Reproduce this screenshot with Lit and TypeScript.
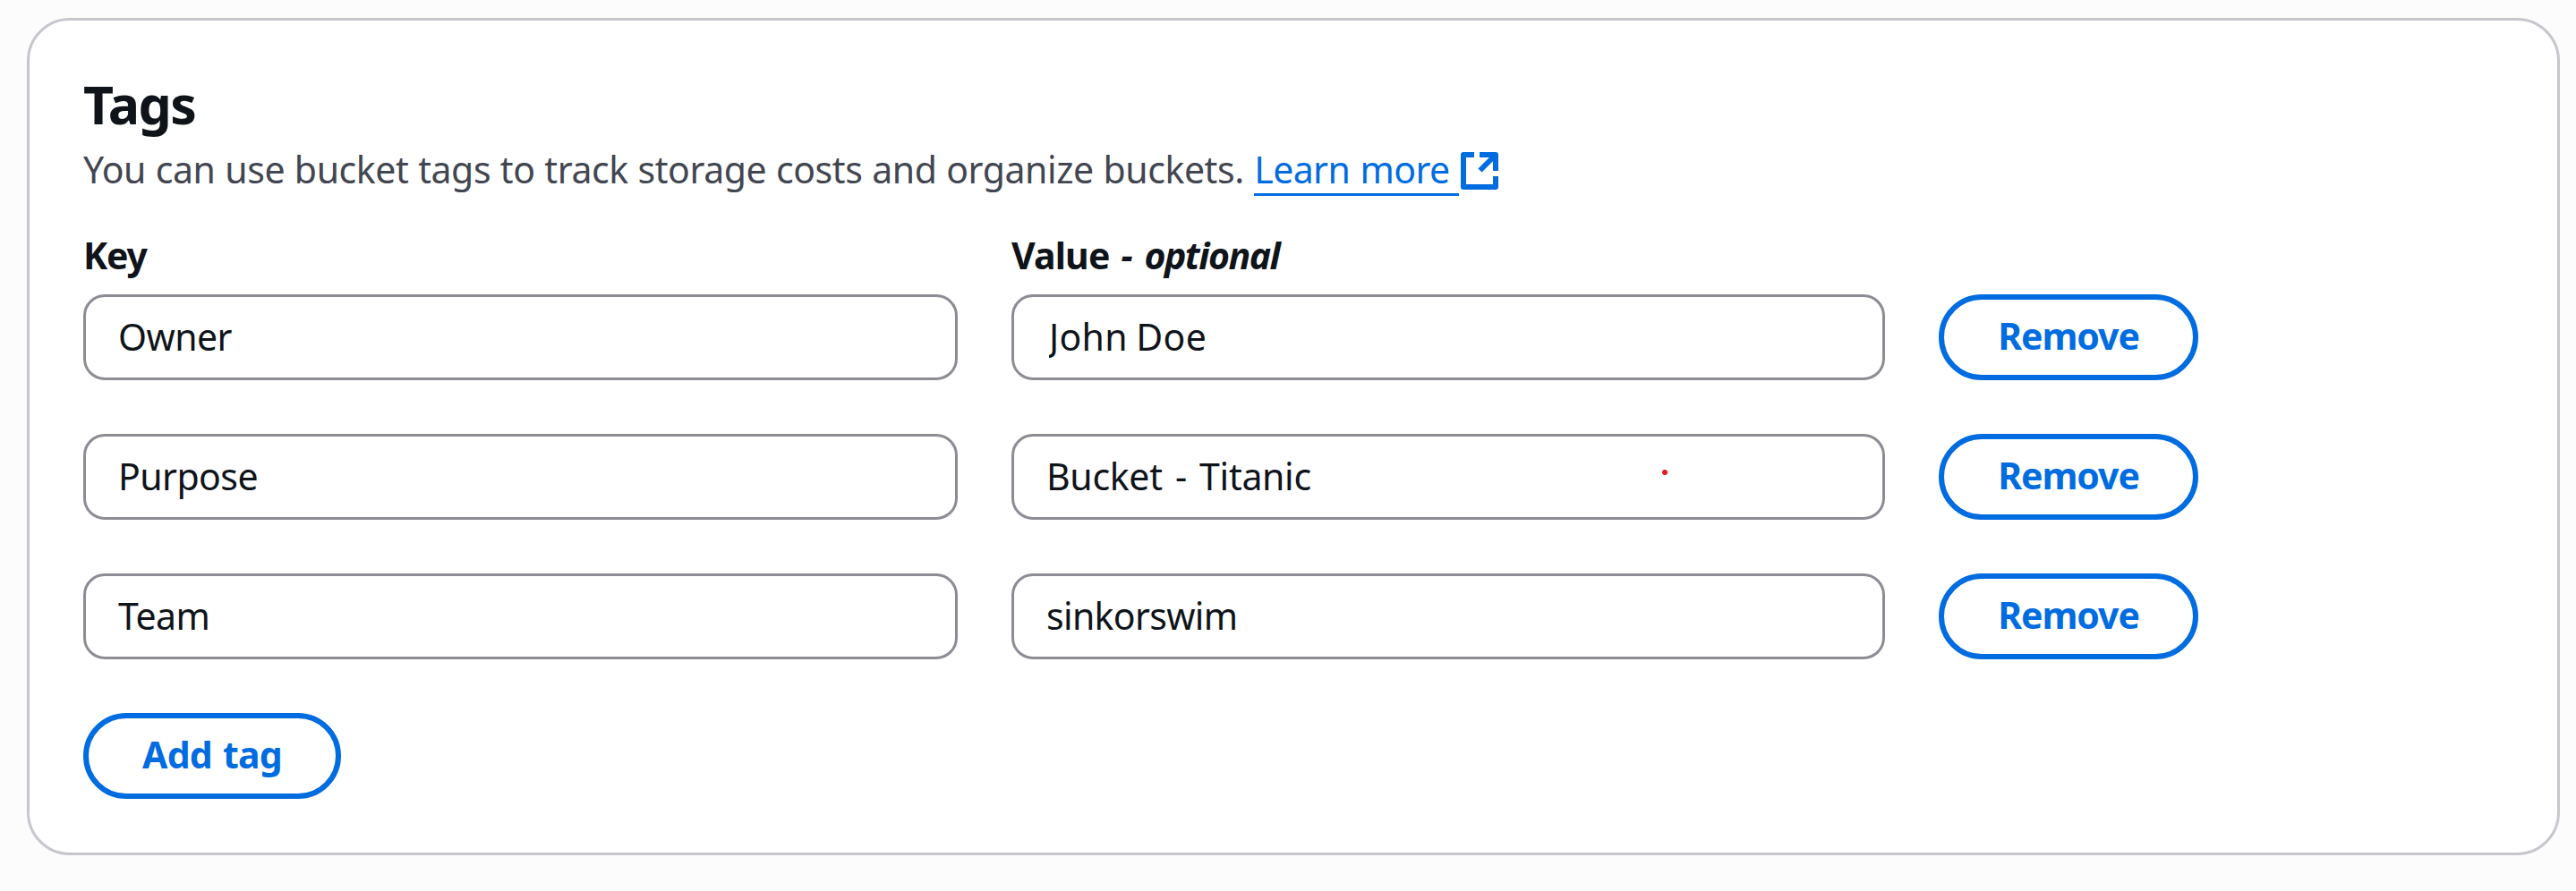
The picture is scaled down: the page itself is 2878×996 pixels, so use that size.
import { LitElement, html, css } from "lit";

interface Tag {
  key: string;
  value: string;
}

class AppRoot extends LitElement {
  static styles = css`
    :host { display: block; box-sizing: border-box; min-height: 996px; padding: 20px 18px 40px 30px; background: #fcfcfd; color: #0f141a; font: 400 41px/60px "Noto Sans", "Open Sans", sans-serif; }
    * { box-sizing: border-box; }
    .card { height: 936px; border: 3px solid #c6c6cd; border-radius: 48px; background: #fff; padding: 57px 60px; }
    h2 { margin: 0 0 7px; font-size: 59px; line-height: 72px; font-weight: 700; letter-spacing: -1.56px; }
    .desc { margin: 0 0 36px; color: #424650; letter-spacing: -0.42px; word-spacing: 0.5px; white-space: nowrap; display: flex; }
    .link { display: inline-flex; color: #006ce0; margin-left: 11.500px; letter-spacing: -0.6px; word-spacing: 1.3px; }
    .label { height: 60px; width: 229px; border-bottom: 3px solid #006ce0; }
    .icon { width: 42px; height: 42px; margin: 11px 0 0 2px; }
    .grid { display: grid; grid-template-columns: 977px 976px 290px; gap: 60px; }
    .heads { font-weight: 700; margin-bottom: 14px; letter-spacing: -0.83px; }
    .opt { letter-spacing: -1.47px; word-spacing: 5px; padding-left: 3px; }
    .key { letter-spacing: -1.19px; }
    .field { position: relative; display: flex; }
    input { width: 100%; height: 96px; border: 3px solid #8c8c94; border-radius: 24px; background: #fff; padding: 0 36px 2px; font: inherit; color: inherit; letter-spacing: -0.55px; outline: none; }
    .value-0 { letter-spacing: 0.3px; word-spacing: -1.5px; padding-left: 39px; }
    .value-1 { letter-spacing: -0.3px; word-spacing: 3.9px; }
    .value-2 { letter-spacing: -0.66px; }
    button { height: 96px; border: 6px solid #006ce0; border-radius: 48px; background: #fff; color: #006ce0; font: inherit; font-weight: 700; padding: 0 0 4px; letter-spacing: -1.08px; }
    .add { width: 288px; margin-top: 60px; letter-spacing: -0.75px; word-spacing: 2px; }
    .dot { position: absolute; left: 727px; top: 40px; width: 6px; height: 6px; border-radius: 50%; background: #e8161d; }
  `;

  tags: Tag[] = [
    { key: "Owner", value: "John Doe" },
    { key: "Purpose", value: "Bucket - Titanic" },
    { key: "Team", value: "sinkorswim" },
  ];

  render() {
    return html`
      <section class="card">
        <h2>Tags</h2>
        <p class="desc">
          <span>You can use bucket tags to track storage costs and organize buckets.</span>
          <a class="link"><span class="label">Learn more</span>
            <svg class="icon" viewBox="0 0 42 42" fill="none" stroke="#006ce0" stroke-width="6">
              <path stroke-linejoin="round" d="M15 3H3v36h36V27" />
              <path stroke-linejoin="round" d="M21 3h18v18" />
              <path d="M38 4L21.500 20.500" />
            </svg></a>
        </p>
        <div class="grid heads"><span class="key">Key</span><span>Value <i class="opt">- optional</i></span></div>
        <div class="grid">
          ${this.tags.map((t, i) => html`
            <div class="field"><input .value=${t.key} /></div>
            <div class="field"><input class="value-${i}" .value=${t.value} />${i === 1 ? html`<span class="dot"></span>` : ""}</div>
            <button>Remove</button>`)}
        </div>
        <button class="add">Add tag</button>
      </section>`;
  }
}
customElements.define("app-root", AppRoot);
